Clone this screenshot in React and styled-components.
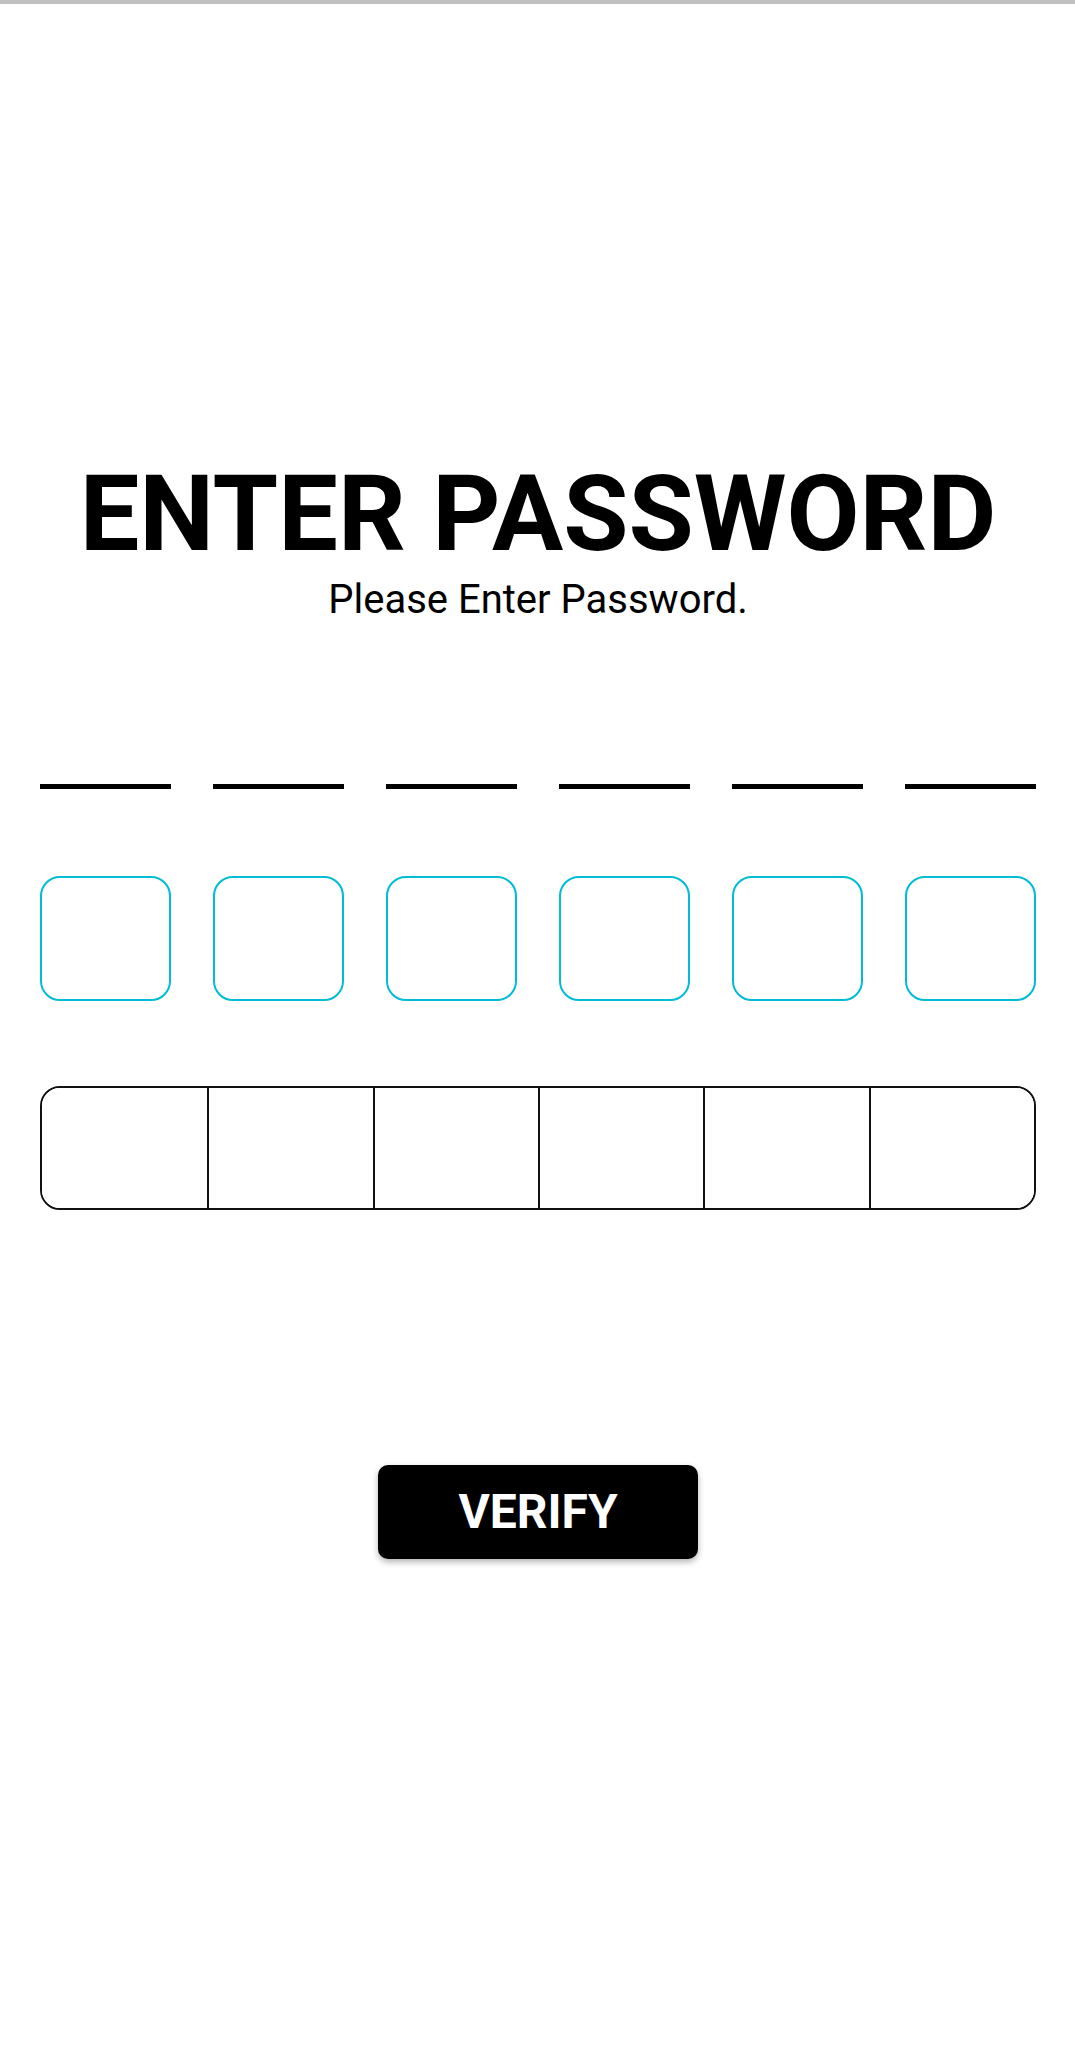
import React from "react";
import styled, { createGlobalStyle } from "styled-components";

const Global = createGlobalStyle`
  html, body { margin: 0; padding: 0; background: #ffffff; }
  body { font-family: Roboto, "Noto Sans", Arial, sans-serif; color: #000; }
  * { box-sizing: border-box; }
`;

const TopBar = styled.div`
  height: 4px;
  background: #c0c0c0;
`;

const Page = styled.main`
  display: flex;
  flex-direction: column;
  align-items: stretch;
  padding: 457px 39px 0 40px;
  min-height: 2050px;
`;

const Title = styled.h1`
  margin: 0;
  font-family: Roboto, Arial, sans-serif;
  font-weight: 700;
  font-size: 106px;
  line-height: 106px;
  text-align: center;
  letter-spacing: 0;
`;

const Subtitle = styled.p`
  margin: 13px 0 0;
  font-family: Roboto, Arial, sans-serif;
  font-weight: 400;
  font-size: 40px;
  line-height: 40px;
  text-align: center;
`;

const Row = styled.div`
  display: flex;
  justify-content: space-between;
  margin-top: ${(p) => p.$gap}px;
`;

const UnderlineInput = styled.input`
  width: 131px;
  height: 61px;
  border: none;
  border-bottom: 5px solid #000;
  background: transparent;
  outline: none;
  padding: 0;
  font: 700 40px Roboto, Arial, sans-serif;
  text-align: center;
`;

const BoxInput = styled.input`
  width: 131px;
  height: 125px;
  border: 2px solid #00bcd4;
  border-radius: 20px;
  background: #fff;
  outline: none;
  padding: 0;
  font: 700 40px Roboto, Arial, sans-serif;
  text-align: center;
`;

const Segmented = styled.div`
  display: grid;
  grid-template-columns: repeat(6, 1fr);
  height: 124px;
  margin-top: 85px;
  border: 2px solid #111;
  border-radius: 20px;
  overflow: hidden;
`;

const SegmentInput = styled.input`
  min-width: 0;
  height: 100%;
  border: none;
  border-left: ${(p) => (p.$first ? "none" : "2px solid #111")};
  background: #fff;
  outline: none;
  padding: 0;
  font: 700 40px Roboto, Arial, sans-serif;
  text-align: center;
`;

const ButtonWrap = styled.div`
  display: flex;
  justify-content: center;
  margin-top: 255px;
`;

const VerifyButton = styled.button`
  width: 320px;
  height: 94px;
  border: none;
  border-radius: 10px;
  background: #000;
  color: #fff;
  font-family: Roboto, Arial, sans-serif;
  font-weight: 700;
  font-size: 48px;
  line-height: 1;
  letter-spacing: 0;
  box-shadow: 0 3px 6px rgba(0, 0, 0, 0.3);
  cursor: pointer;
`;

const idx = [0, 1, 2, 3, 4, 5];

export default function App() {
  return (
    <>
      <Global />
      <TopBar />
      <Page>
        <Title>ENTER PASSWORD</Title>
        <Subtitle>Please Enter Password.</Subtitle>
        <Row $gap={108}>
          {idx.map((i) => (
            <UnderlineInput key={i} maxLength={1} aria-label={`digit ${i + 1}`} />
          ))}
        </Row>
        <Row $gap={87}>
          {idx.map((i) => (
            <BoxInput key={i} maxLength={1} aria-label={`box digit ${i + 1}`} />
          ))}
        </Row>
        <Segmented>
          {idx.map((i) => (
            <SegmentInput key={i} $first={i === 0} maxLength={1} aria-label={`segment ${i + 1}`} />
          ))}
        </Segmented>
        <ButtonWrap>
          <VerifyButton>VERIFY</VerifyButton>
        </ButtonWrap>
      </Page>
    </>
  );
}
